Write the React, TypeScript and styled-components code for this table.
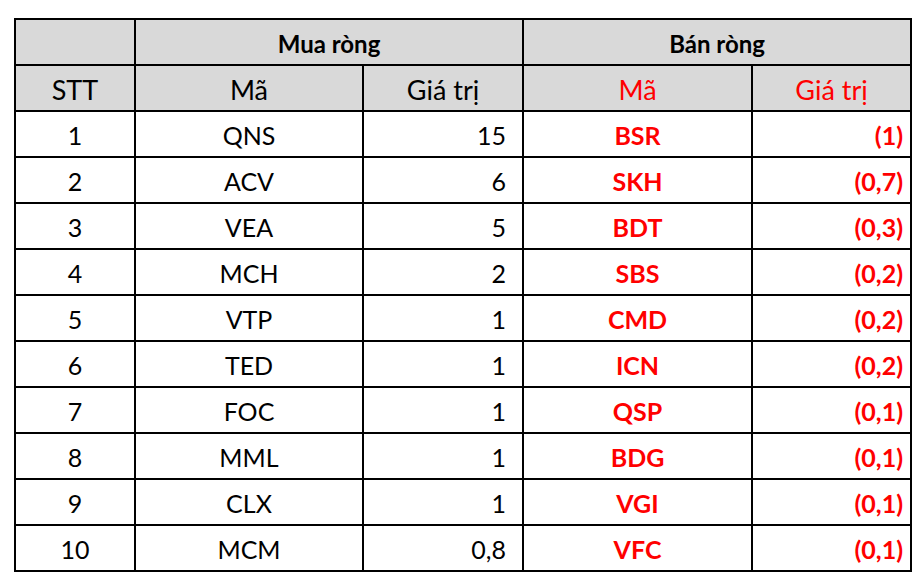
import styled, { createGlobalStyle } from 'styled-components';

const GlobalStyle = createGlobalStyle`
  html, body {
    margin: 0;
    padding: 0;
    background: #ffffff;
  }
  body {
    font-family: Lato, "Open Sans", "Liberation Sans", sans-serif;
  }
`;

interface Row {
  buyCode: string;
  buyValue: string;
  sellCode: string;
  sellValue: string;
}

const rows: Row[] = [
  { buyCode: 'QNS', buyValue: '15', sellCode: 'BSR', sellValue: '(1)' },
  { buyCode: 'ACV', buyValue: '6', sellCode: 'SKH', sellValue: '(0,7)' },
  { buyCode: 'VEA', buyValue: '5', sellCode: 'BDT', sellValue: '(0,3)' },
  { buyCode: 'MCH', buyValue: '2', sellCode: 'SBS', sellValue: '(0,2)' },
  { buyCode: 'VTP', buyValue: '1', sellCode: 'CMD', sellValue: '(0,2)' },
  { buyCode: 'TED', buyValue: '1', sellCode: 'ICN', sellValue: '(0,2)' },
  { buyCode: 'FOC', buyValue: '1', sellCode: 'QSP', sellValue: '(0,1)' },
  { buyCode: 'MML', buyValue: '1', sellCode: 'BDG', sellValue: '(0,1)' },
  { buyCode: 'CLX', buyValue: '1', sellCode: 'VGI', sellValue: '(0,1)' },
  { buyCode: 'MCM', buyValue: '0,8', sellCode: 'VFC', sellValue: '(0,1)' },
];

const App = () => {
  return (
    <Page>
      <GlobalStyle />
      <Table>
        <colgroup>
          <col style={{ width: 120 }} />
          <col style={{ width: 228 }} />
          <col style={{ width: 160 }} />
          <col style={{ width: 229 }} />
          <col style={{ width: 159 }} />
        </colgroup>
        <thead>
          <tr>
            <GroupCell />
            <GroupCell colSpan={2}>Mua ròng</GroupCell>
            <GroupCell colSpan={2}>Bán ròng</GroupCell>
          </tr>
          <tr>
            <HeadCell>STT</HeadCell>
            <HeadCell>Mã</HeadCell>
            <HeadCell>Giá trị</HeadCell>
            <HeadCell $red>Mã</HeadCell>
            <HeadCell $red>Giá trị</HeadCell>
          </tr>
        </thead>
        <tbody>
          {rows.map((row, index) => (
            <tr key={row.buyCode}>
              <Cell>{index + 1}</Cell>
              <Cell>{row.buyCode}</Cell>
              <ValueCell $pad={16}>{row.buyValue}</ValueCell>
              <Cell $red $bold>{row.sellCode}</Cell>
              <ValueCell $pad={7} $red $bold>{row.sellValue}</ValueCell>
            </tr>
          ))}
        </tbody>
      </Table>
    </Page>
  );
};

const Page = styled.div`
  padding: 18px 0 0 14px;
  background: #ffffff;
  min-height: 580px;
  box-sizing: border-box;
`;

const Table = styled.table`
  border-collapse: collapse;
  table-layout: fixed;
  width: 897px;
`;

const Cell = styled.td<{ $red?: boolean; $bold?: boolean }>`
  height: 41px;
  padding: 3px 0 0 0;
  border: 2px solid #000000;
  text-align: center;
  font-size: 25px;
  line-height: 1;
  color: ${({ $red }) => ($red ? '#ff0000' : '#000000')};
  font-weight: ${({ $bold }) => ($bold ? 700 : 400)};
  white-space: nowrap;
`;

const HeadCell = styled.th<{ $red?: boolean }>`
  height: 42px;
  padding: 2px 0 0 0;
  border: 2px solid #000000;
  background: #d9d9d9;
  text-align: center;
  font-size: 27px;
  font-weight: 400;
  line-height: 1;
  color: ${({ $red }) => ($red ? '#ff0000' : '#000000')};
  white-space: nowrap;
`;

const GroupCell = styled(HeadCell)`
  font-size: 24px;
  font-weight: 700;
  padding-top: 3px;
  padding-bottom: 0;
  height: 41px;
`;

const ValueCell = styled(Cell)<{ $pad: number }>`
  text-align: right;
  padding-right: ${({ $pad }) => $pad}px;
`;

export default App;
